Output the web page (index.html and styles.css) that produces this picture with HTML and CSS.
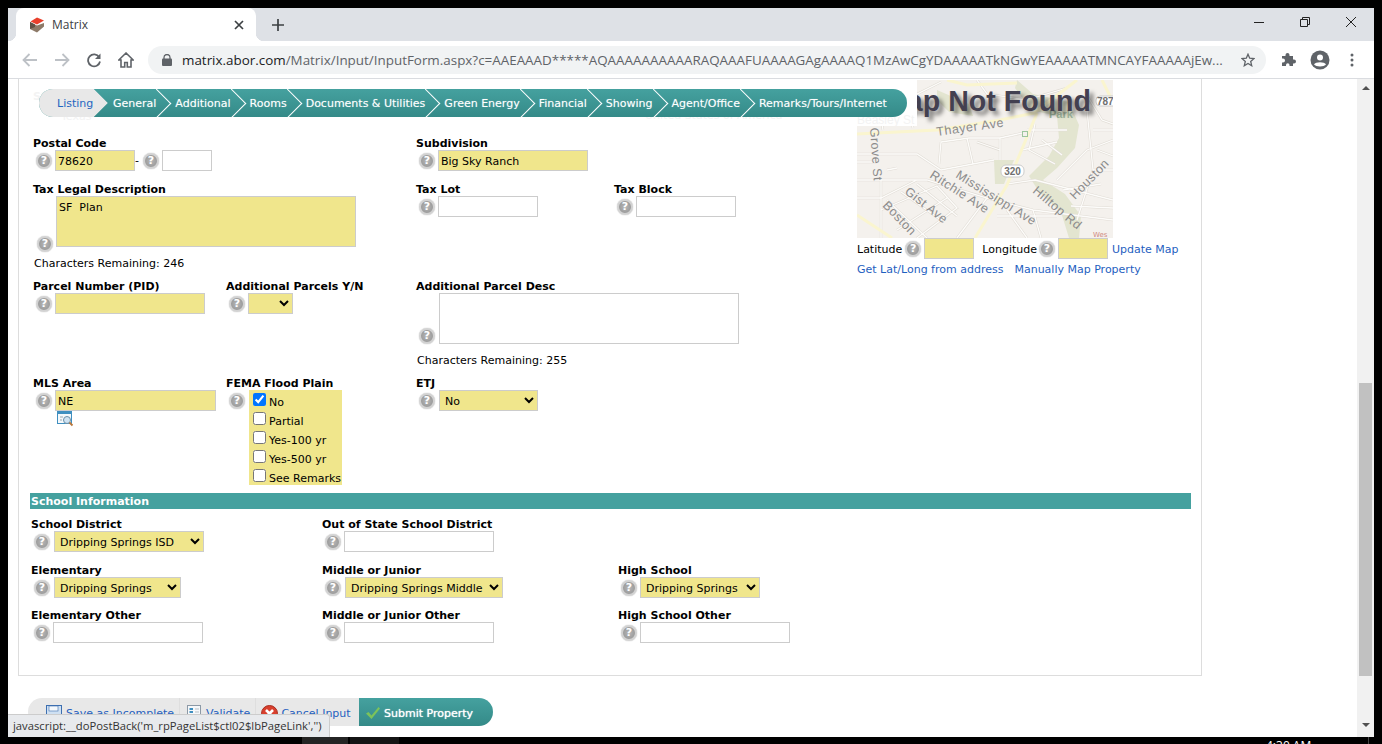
FILE: index.html
```html
<!DOCTYPE html>
<html lang="en">
<head>
    <meta charset="UTF-8">
    <title>Matrix</title>
    <link rel="stylesheet" href="styles.css">
</head>
<body>
<div class="window">
    <div class="tabstrip">
        <div class="tab">
            <svg class="favicon" width="16" height="16" viewBox="0 0 16 16"><path d="M8 .5 15 3.500 8 7.500 1.500 4.500Z" fill="#e8402c"/><path d="M1 5 8 8.500 15 6v3.500L8 15.500 1 12Z" fill="#8d7a68"/><path d="M1 5 6 7.500V10L1 12Z" fill="#5f5145"/></svg>
            <span class="tab-title">Matrix</span>
            <svg class="tab-close" width="10" height="10" viewBox="0 0 10 10"><path d="M1 1 9 9M9 1 1 9" stroke="#3c4043" stroke-width="1.700"/></svg>
        </div>
        <svg class="new-tab" width="12" height="12" viewBox="0 0 12 12"><path d="M6 0V12M0 6H12" stroke="#3c4043" stroke-width="1.700"/></svg>
        <div class="win-controls">
            <span class="win-btn"><svg width="10" height="10" viewBox="0 0 10 10"><path d="M0 5.500H10" stroke="#222" stroke-width="1"/></svg></span>
            <span class="win-btn"><svg width="10" height="10" viewBox="0 0 10 10"><path d="M.5 2.500H7.500V9.500H.5ZM2.500 2.500V.5H9.500V7.500H7.500" fill="none" stroke="#222"/></svg></span>
            <span class="win-btn"><svg width="10" height="10" viewBox="0 0 10 10"><path d="M0 0 10 10M10 0 0 10" stroke="#222" stroke-width="1"/></svg></span>
        </div>
    </div>

    <div class="toolbar">
        <span class="tool"><svg width="16" height="14" viewBox="0 0 16 14"><path d="M15 7H2M7.500 1 1.500 7l6 6" fill="none" stroke="#bdc1c6" stroke-width="1.800"/></svg></span>
        <span class="tool"><svg width="16" height="14" viewBox="0 0 16 14"><path d="M1 7H14M8.500 1l6 6-6 6" fill="none" stroke="#bdc1c6" stroke-width="1.800"/></svg></span>
        <span class="tool"><svg width="16" height="16" viewBox="0 0 16 16"><path d="M13.200 5.200A6 6 0 1 0 14 9.500" fill="none" stroke="#5f6368" stroke-width="1.800"/><path d="M14.500 1.500V7H9Z" fill="#5f6368"/></svg></span>
        <span class="tool"><svg width="16" height="16" viewBox="0 0 16 16"><path d="M8 1 .8 8H3v7h3.700v-4.500h2.600V15H13V8h2.200Z" fill="none" stroke="#5f6368" stroke-width="1.600"/></svg></span>
        <div class="omnibox">
            <svg class="lock" width="10" height="12" viewBox="0 0 10 12"><path d="M2 5V3.500a3 3 0 0 1 6 0V5" fill="none" stroke="#5f6368" stroke-width="1.300"/><rect y="4.500" width="10" height="7.500" rx="1" fill="#5f6368"/></svg>
            <span class="url"><b>matrix.abor.com</b>/Matrix/Input/InputForm.aspx?c=AAEAAAD*****AQAAAAAAAAAARAQAAAFUAAAAGAgAAAAQ1MzAwCgYDAAAAATkNGwYEAAAAATMNCAYFAAAAAjEw...</span>
            <svg class="star" width="14" height="14" viewBox="0 0 14 14"><path d="M7 1.200 8.700 5.200 13 5.600 9.700 8.400 10.700 12.700 7 10.400 3.300 12.700 4.300 8.400 1 5.600 5.300 5.200Z" fill="none" stroke="#5f6368" stroke-width="1.300"/></svg>
        </div>
        <span class="tool first-ext"><svg width="15" height="15" viewBox="0 0 15 15"><path d="M1 4H4.500V3A2 2 0 0 1 8.500 3V4H12V7.500H13a2 2 0 0 1 0 4H12V14H8.500V13A1.700 1.700 0 0 0 5 13V14H1V10.500H2a2 2 0 0 0 0-4H1Z" fill="#5f6368"/></svg></span>
        <span class="tool"><svg width="20" height="20" viewBox="0 0 20 20"><circle cx="10" cy="10" r="9.500" fill="#5f6368"/><circle cx="10" cy="7.500" r="3" fill="#fff"/><path d="M4 14.500C5.500 11.500 14.500 11.500 16 14.500 14 17 6 17 4 14.500Z" fill="#fff"/></svg></span>
        <span class="tool"><svg width="4" height="14" viewBox="0 0 4 14"><circle cx="2" cy="2" r="1.500" fill="#5f6368"/><circle cx="2" cy="7" r="1.500" fill="#5f6368"/><circle cx="2" cy="12" r="1.500" fill="#5f6368"/></svg></span>
    </div>

    <div class="viewport">
        <div class="content">
            <div class="panel">
                <div class="top">
                    <div class="top-left">
                        <div class="row row-postal">
                            <div class="field">
                                <label>Postal Code</label>
                                <div class="ctl"><span class="help">?</span><input class="req w80" value="78620"><span class="dash">-</span><span class="help">?</span><input class="w50"></div>
                            </div>
                            <div></div>
                            <div class="field">
                                <label>Subdivision</label>
                                <div class="ctl"><span class="help">?</span><input class="req w150" value="Big Sky Ranch"></div>
                            </div>
                        </div>
                        <div class="row row-tax">
                            <div class="field span2">
                                <label>Tax Legal Description</label>
                                <div class="ctl ctl-area"><span class="help help-area">?</span><textarea class="req">SF  Plan</textarea></div>
                                <div class="remaining">Characters Remaining: 246</div>
                            </div>
                            <div class="field">
                                <label>Tax Lot</label>
                                <div class="ctl"><span class="help">?</span><input class="w100"></div>
                            </div>
                            <div class="field">
                                <label>Tax Block</label>
                                <div class="ctl"><span class="help">?</span><input class="w100"></div>
                            </div>
                        </div>
                        <div class="row row-parcel">
                            <div class="field">
                                <label>Parcel Number (PID)</label>
                                <div class="ctl"><span class="help">?</span><input class="req w150"></div>
                            </div>
                            <div class="field">
                                <label>Additional Parcels Y/N</label>
                                <div class="ctl"><span class="help">?</span><select class="req sel-yn"><option></option></select></div>
                            </div>
                            <div class="field span2">
                                <label>Additional Parcel Desc</label>
                                <div class="ctl ctl-area"><span class="help">?</span><textarea class="plain"></textarea></div>
                                <div class="remaining">Characters Remaining: 255</div>
                            </div>
                        </div>
                        <div class="row row-area">
                            <div class="field">
                                <label>MLS Area</label>
                                <div class="ctl"><span class="help">?</span><input class="req w161" value="NE"></div>
                                <svg class="lookup" width="17" height="16" viewBox="0 0 17 16"><rect x=".5" y=".5" width="14" height="12" fill="#f4f8fb" stroke="#3f8fc0"/><rect x="1" y="1" width="13" height="2" fill="#3f8fc0"/><path d="M3 6H6M3 9H5" stroke="#9aa7b0"/><circle cx="10" cy="9" r="3.500" fill="#cfe3f2" stroke="#6c8fa8"/><path d="M12.500 11.500 15.500 14.500" stroke="#b9773a" stroke-width="1.800"/></svg>
                            </div>
                            <div class="field">
                                <label>FEMA Flood Plain</label>
                                <div class="ctl ctl-top">
                                    <span class="help">?</span>
                                    <div class="checks">
                                        <div class="check"><input type="checkbox" checked>No</div>
                                        <div class="check"><input type="checkbox">Partial</div>
                                        <div class="check"><input type="checkbox">Yes-100 yr</div>
                                        <div class="check"><input type="checkbox">Yes-500 yr</div>
                                        <div class="check"><input type="checkbox">See Remarks</div>
                                    </div>
                                </div>
                            </div>
                            <div class="field">
                                <label>ETJ</label>
                                <div class="ctl"><span class="help">?</span><select class="req sel sel-etj"><option>No</option></select></div>
                            </div>
                        </div>
                    </div>

                    <div class="map-col">
                        <div class="map">
                            <svg width="256" height="158" viewBox="0 0 256 158">
                                <rect width="256" height="158" fill="#f4f1ed"/>
                                <g fill="#e3e5d0">
                                    <path d="M160 0 176 14 212 22 222 45 218 68 200 88 186 100 208 114 224 136 222 158H212L204 132 182 112 172 96 192 76 202 58 200 36 174 30 158 8Z"/>
                                    <path d="M80 10 112 24 116 36 92 32 80 20Z"/>
                                    <path d="M137 80H157L147 104H138Z"/>
                                </g>
                                <g fill="none" stroke="#e0dcd5" stroke-width="2.400">
                                    <path id="streets" d="M0 74H60L84 90 137 80M0 100H70L130 118 176 130 256 140M84 62 112 58H143V80M84 62 82 84M110 58 116 84M24 100V158M0 118H24L60 100M24 130 80 106 100 128 60 158M40 150 90 118M150 104 178 100 256 120M170 50H210M165 70 200 62M178 44 172 70 198 84M230 30 236 90 220 140M200 100 230 70 256 60M236 50H256M236 90H256M130 118 100 158M0 82H18M30 90 40 88M143 58 170 52M120 62 143 70M185 60 205 75M176 18 210 8M228 12 245 40 256 44M30 120 70 158M44 112 84 140M60 104 100 136M150 130 170 158M176 130 184 158M140 136H200M206 110 244 104M214 126 256 128M240 70 256 76M120 0 130 14 170 20M0 20 60 14 84 2M20 14 26 50M50 16 56 48"/>
                                </g>
                                <use href="#streets" class="street-fill"/>
                                <g fill="none" stroke="#faf5cf" stroke-width="3">
                                    <path d="M0 54 80 50 143 40 177 33 220 0M90 0 110 5 160 3M118 158 150 105 180 33M0 135 35 158M245 0 256 22"/>
                                </g>
                                <rect x="165.500" y="51.500" width="5" height="5" fill="#f4f1ed" stroke="#9cc59c"/>
                                <g class="map-labels">
                                    <text transform="translate(80 56) rotate(-8)">Thayer Ave</text>
                                    <text transform="translate(13 48) rotate(86)">Grove St</text>
                                    <text transform="translate(98 97) rotate(32)">Mississippi Ave</text>
                                    <text transform="translate(72 97) rotate(33)">Ritchie Ave</text>
                                    <text transform="translate(47 113) rotate(38)">Gist Ave</text>
                                    <text transform="translate(25 126) rotate(46)">Boston</text>
                                    <text transform="translate(175 112) rotate(40)">Hilltop Rd</text>
                                    <text transform="translate(218 120) rotate(-46)">Houston</text>
                                </g>
                                <text class="map-park" x="192" y="38">Park</text>
                                <rect x="144" y="85" width="23" height="12" rx="5" fill="#fff" stroke="#ccc"/>
                                <text class="map-shield" x="155.500" y="95" text-anchor="middle">320</text>
                                <rect x="239" y="16" width="22" height="10" rx="4" fill="#fff" stroke="#ccc"/>
                                <text class="map-shield" x="240" y="25">787</text>
                                <text class="map-town" x="236" y="157">Wes</text>
                            </svg>
                            <div class="map-missing">Map Not Found</div>
                        </div>
                        <div class="latlong">
                            <span>Latitude</span><span class="help">?</span><input class="req w50 ll">
                            <span class="lon-label">Longitude</span><span class="help">?</span><input class="req w50 ll">
                            <a class="update-link">Update Map</a>
                        </div>
                        <div class="map-links"><a>Get Lat/Long from address</a><a>Manually Map Property</a></div>
                    </div>
                </div>

                <div class="section-bar">School Information</div>

                <div class="school-row first">
                    <div class="field">
                        <label>School District</label>
                        <div class="ctl"><span class="help">?</span><select class="req sel sel-district"><option>Dripping Springs ISD</option></select></div>
                    </div>
                    <div class="field">
                        <label>Out of State School District</label>
                        <div class="ctl"><span class="help">?</span><input class="w150"></div>
                    </div>
                </div>
                <div class="school-row">
                    <div class="field">
                        <label>Elementary</label>
                        <div class="ctl"><span class="help">?</span><select class="req sel sel-elem"><option>Dripping Springs</option></select></div>
                    </div>
                    <div class="field">
                        <label>Middle or Junior</label>
                        <div class="ctl"><span class="help">?</span><select class="req sel sel-middle"><option>Dripping Springs Middle</option></select></div>
                    </div>
                    <div class="field">
                        <label>High School</label>
                        <div class="ctl"><span class="help">?</span><select class="req sel sel-high"><option>Dripping Springs</option></select></div>
                    </div>
                </div>
                <div class="school-row other">
                    <div class="field">
                        <label>Elementary Other</label>
                        <div class="ctl"><span class="help">?</span><input class="w150"></div>
                    </div>
                    <div class="field">
                        <label>Middle or Junior Other</label>
                        <div class="ctl"><span class="help">?</span><input class="w150"></div>
                    </div>
                    <div class="field">
                        <label>High School Other</label>
                        <div class="ctl"><span class="help">?</span><input class="w150"></div>
                    </div>
                </div>
            </div>

            <div class="actions">
                <div class="actions-left">
                    <a class="action">
                        <svg width="16" height="16" viewBox="0 0 16 16"><rect x=".5" y=".5" width="15" height="15" fill="#cfe0f2" stroke="#3d6fb0"/><rect x="3" y="1" width="9" height="5" fill="#f4f8fc" stroke="#3d6fb0" stroke-width=".6"/><rect x="3" y="10" width="10" height="5" fill="#7fa5d2"/></svg>
                        Save as Incomplete</a>
                    <a class="action">
                        <svg width="16" height="16" viewBox="0 0 16 16"><rect x=".5" y=".5" width="13" height="14" fill="#f6f8fa" stroke="#8c99a6"/><path d="M2.500 4H6M2.500 7H6" stroke="#3f8fc0" stroke-width="2"/><path d="M8 4H12M8 7H12" stroke="#b5bec7"/><path d="M6 12H11V9.500L15.500 13 11 16V14H6Z" fill="#3fa34d"/></svg>
                        Validate</a>
                    <a class="action">
                        <svg width="17" height="17" viewBox="0 0 17 17"><circle cx="8.500" cy="8.500" r="8" fill="#d8402e" stroke="#a82c1e"/><path d="M5 5 12 12M12 5 5 12" stroke="#fff" stroke-width="2.600"/></svg>
                        Cancel Input</a>
                </div>
                <a class="submit">
                    <svg width="16" height="14" viewBox="0 0 16 14"><path d="M1 7.500 3.500 6 6.500 9.500 13.500 1 15 2.500 6.500 13Z" fill="#7cc35a"/></svg>
                    Submit Property</a>
            </div>

            <div class="nav-backdrop">
                <span class="ghost ghost-state">State</span>
                <span class="ghost ghost-texas">Texas</span>
                <span class="ghost ghost-country">United States of America</span>
                <span class="ghost ghost-street">Beasley St</span>
                <div class="wizard">
                    <a class="step current">Listing</a>
                    <a class="step">General</a>
                    <a class="step">Additional</a>
                    <a class="step">Rooms</a>
                    <a class="step">Documents &amp; Utilities</a>
                    <a class="step">Green Energy</a>
                    <a class="step">Financial</a>
                    <a class="step">Showing</a>
                    <a class="step">Agent/Office</a>
                    <a class="step last">Remarks/Tours/Internet</a>
                </div>
            </div>

            <div class="status-bubble">javascript:__doPostBack('m_rpPageList$ctl02$lbPageLink','')</div>
        </div>

        <div class="scrollbar">
            <span class="arrow arrow-up"></span>
            <span class="thumb"></span>
            <span class="arrow arrow-down"></span>
        </div>
    </div>
</div>
<div class="taskbar">
    <span class="task task-a"></span>
    <span class="task task-b"></span>
    <span class="clock">4:30 AM</span>
    <span class="task-line"></span>
</div>
</body>
</html>
```

FILE: styles.css
```css
* {
    box-sizing: border-box;
}
html, body {
    height: 100%;
}
body {
    margin: 0;
    background: #000;
    overflow: hidden;
    font-family: "DejaVu Sans", Verdana, sans-serif;
    font-size: 11px;
    color: #000;
}
.window {
    margin: 8px 8px 0 8px;
    width: 1366px;
    height: 729px;
    background: #fff;
    display: flex;
    flex-direction: column;
}

/* browser chrome */
.tabstrip {
    height: 33px;
    background: #dee1e6;
    display: flex;
    align-items: center;
    flex: none;
}
.tab {
    position: relative;
    width: 240px;
    height: 33px;
    margin-left: 8px;
    background: #fff;
    border-radius: 8px 8px 0 0;
    display: flex;
    align-items: center;
    padding-left: 13px;
}
.tab::before, .tab::after {
    content: "";
    position: absolute;
    bottom: 0;
    width: 8px;
    height: 8px;
}
.tab::before {
    left: -8px;
    background: radial-gradient(circle at 0 0, #dee1e6 8px, #fff 8.5px);
}
.tab::after {
    right: -8px;
    background: radial-gradient(circle at 100% 0, #dee1e6 8px, #fff 8.5px);
}
.favicon {
    flex: none;
}
.tab-title {
    margin-left: 7px;
    font-family: "Open Sans", sans-serif;
    font-size: 12px;
    color: #3c4043;
}
.tab-close {
    margin-left: auto;
    margin-right: 12px;
}
.new-tab {
    margin-left: 16px;
}
.win-controls {
    margin-left: auto;
    display: flex;
    height: 100%;
}
.win-btn {
    width: 46px;
    height: 28px;
    display: flex;
    align-items: center;
    justify-content: center;
}
.toolbar {
    height: 38px;
    flex: none;
    display: flex;
    align-items: center;
    padding: 0 6px;
    border-bottom: 1px solid #dadce0;
}
.tool {
    width: 32px;
    height: 28px;
    display: flex;
    align-items: center;
    justify-content: center;
    flex: none;
}
.omnibox {
    flex: 1;
    height: 28px;
    margin-left: 6px;
    background: #f1f3f4;
    border-radius: 14px;
    display: flex;
    align-items: center;
    padding-left: 14px;
    min-width: 0;
}
.lock {
    flex: none;
}
.url {
    margin-left: 10px;
    font-family: "Open Sans", sans-serif;
    font-size: 13.420px;
    color: #5f6368;
    white-space: nowrap;
    width: 1042px;
}
.url b {
    font-weight: normal;
    color: #202124;
}
.star {
    margin-left: 17px;
    flex: none;
}
.first-ext {
    margin-left: 6px;
}

/* page area */
.viewport {
    flex: 1;
    display: flex;
    min-height: 0;
}
.content {
    position: relative;
    width: 1349px;
    overflow: hidden;
}
.panel {
    margin-left: 10px;
    width: 1184px;
    height: 597px;
    border: 1px solid #ddd;
    border-top: 0;
}
.top {
    display: flex;
    height: 414px;
}
.top-left {
    width: 838px;
    padding-top: 57px;
}
.row {
    display: grid;
    grid-template-columns: 193px 190px 198px 198px;
    padding-left: 14px;
}
.row-tax {
    margin-top: 11px;
}
.row-parcel {
    margin-top: 9px;
}
.row-area {
    margin-top: 9px;
}
.span2 {
    grid-column: span 2;
}
.field label {
    display: block;
    font-weight: bold;
    height: 14px;
    line-height: 16px;
    white-space: nowrap;
}
.ctl {
    display: flex;
    align-items: center;
    gap: 3px;
    margin-left: 3px;
    height: 21px;
}
.ctl-top {
    align-items: flex-start;
    height: auto;
}
.ctl-area {
    height: 51px;
    align-items: flex-end;
}
.help {
    width: 16px;
    height: 16px;
    flex: none;
    border-radius: 50%;
    background: radial-gradient(#b8b8b8, #8f8f8f);
    border: 2px solid #d2d2d2;
    box-shadow: 0 0 1px #999;
    color: #fff;
    font-weight: bold;
    font-size: 11px;
    line-height: 12px;
    text-align: center;
}
.ctl-top .help {
    margin-top: 3px;
}
.help-area {
    margin: 0 0 -5px 1px;
}
input:not([type=checkbox]), textarea, select {
    font-family: "DejaVu Sans", Verdana, sans-serif;
    font-size: 11px;
    color: #000;
    background: #fff;
    border: 1px solid #ccc;
    border-radius: 0;
    outline: none;
    margin: 0;
    height: 21px;
    padding: 2px 2px 0;
    flex: none;
}
input.req, textarea.req, select.req {
    background: #f0e68c;
}
select.req {
    padding-left: 1px;
}
textarea {
    width: 300px;
    height: 51px !important;
    resize: none;
    overflow: hidden;
    padding-top: 4px !important;
}
.w50 { width: 50px; }
.w80 { width: 80px; }
.w100 { width: 100px; }
.w150 { width: 150px; }
.w161 { width: 161px; }
.dash {
    margin: 0 -1px 0 -3px;
    width: 6px;
}
.plain {
    margin-left: 1px;
}
.remaining {
    margin: 9px 0 0 1px;
    height: 14px;
    line-height: 16px;
    white-space: nowrap;
}
.lookup {
    display: block;
    margin: 0 0 0 24px;
}
.sel {
    margin-left: 1px;
}
.sel-yn { width: 45px; }
.sel-etj { width: 99px; }
.sel-district { width: 150px; }
.sel-elem { width: 127px; }
.sel-middle { width: 158px; }
.sel-high {
    width: 120px;
    margin-left: 0;
}
.checks {
    width: 93px;
    height: 95px;
    margin-left: 1px;
    background: #f0e68c;
}
.check {
    height: 19px;
    display: flex;
    align-items: flex-start;
    line-height: 26px;
    white-space: nowrap;
}
.check input {
    margin: 3px 3px 0 4px;
}

/* map */
.map-col {
    padding-top: 1px;
}
.map {
    position: relative;
    width: 256px;
    height: 158px;
    overflow: hidden;
}
.map svg {
    display: block;
}
.street-fill {
    fill: none;
    stroke: #fdfcfa;
    stroke-width: 1.300;
}
.map-labels text {
    font-family: "Liberation Sans", sans-serif;
    font-size: 12.500px;
    fill: #8b8b8b;
    letter-spacing: .5px;
}
.map-park {
    font-family: "Liberation Sans", sans-serif;
    font-size: 11px;
    font-weight: bold;
    fill: #9fb59e;
}
.map-shield {
    font-family: "Liberation Sans", sans-serif;
    font-size: 10px;
    font-weight: bold;
    fill: #6f6f6f;
}
.map-town {
    font-size: 7px;
    fill: #d08a80;
}
.map-missing {
    position: absolute;
    left: 26px;
    top: 5px;
    font-family: "Liberation Sans", sans-serif;
    font-size: 28.600px;
    font-weight: bold;
    line-height: 33px;
    color: #434050;
    white-space: nowrap;
    text-shadow: 4px 4px 4px rgba(0,0,0,.5);
}
.latlong {
    display: flex;
    align-items: center;
    gap: 3px;
    height: 21px;
    line-height: 14px;
}
.latlong > span:not(.help), .latlong a {
    padding-top: 2px;
}
.lon-label {
    margin: 0 -1px 0 5px;
}
.update-link {
    margin-left: 1px;
}
a {
    color: #1f5fbf;
    white-space: nowrap;
}
.map-links {
    display: flex;
    gap: 11px;
    margin-top: 4px;
    line-height: 14px;
}

/* school section */
.section-bar {
    margin: 0 10px 0 11px;
    height: 16px;
    background: #45a19f;
    color: #fff;
    font-weight: bold;
    line-height: 18px;
    padding-left: 1px;
}
.school-row {
    display: grid;
    grid-template-columns: 291px 296px 1fr;
    padding-left: 12px;
    margin-top: 11px;
}
.school-row.first {
    margin-top: 8px;
}
.school-row.other {
    margin-top: 10px;
}

/* bottom actions */
.actions {
    display: flex;
    margin: 22px 0 0 20px;
    width: 465px;
    height: 28px;
}
.actions-left {
    flex: none;
    width: 331px;
    background: #e8e8e8;
    border-radius: 14px 0 0 14px;
    display: flex;
    padding-left: 13px;
}
.action {
    display: flex;
    align-items: center;
    gap: 3px;
    padding: 2px 5px 0;
    border-right: 1px solid #dedede;
}
.action:first-child {
    margin-right: 2px;
}
.action:first-child svg {
    margin-right: 1px;
}
.action:last-child {
    border-right: 0;
}
.submit {
    flex: 1;
    background: linear-gradient(#45a19f, #348a88);
    border-radius: 0 14px 14px 0;
    display: flex;
    align-items: center;
    gap: 3px;
    padding: 2px 0 0 6px;
    color: #fff;
    text-shadow: 0 0 1px #fff;
}

/* wizard strip, stays over the scrolled form */
.nav-backdrop {
    position: absolute;
    left: 11px;
    top: 0;
    width: 898px;
    height: 47px;
    background: #fff;
    overflow: hidden;
}
.ghost {
    position: absolute;
    color: #f3f3f3;
    white-space: nowrap;
}
.ghost-state { left: 14px; top: 11px; font-weight: bold; }
.ghost-texas { left: 42px; top: 31px; }
.ghost-country { left: 626px; top: 30px; }
.ghost-street { left: 838px; top: 34px; font-family: "Liberation Sans", sans-serif; font-size: 12px; }
.wizard {
    position: absolute;
    left: 20px;
    top: 10px;
    width: 868px;
    height: 28px;
    display: flex;
    align-items: center;
    overflow: hidden;
    border-radius: 14px;
    background: linear-gradient(#45a19f, #348a88);
}
.step {
    position: relative;
    height: 28px;
    line-height: 30px;
    padding-left: 19px;
    color: #fff;
    text-shadow: 0 0 1px rgba(255,255,255,.4);
}
.step::after {
    content: "";
    position: absolute;
    left: calc(100% - 10px);
    top: 4px;
    width: 20px;
    height: 20px;
    transform: rotate(45deg);
    border-top: 1px solid #fff;
    border-right: 1px solid #fff;
}
.step.last::after {
    display: none;
}
.step.current {
    width: 55px;
    padding-left: 18px;
    color: #1f66c1;
    background: #e8e8e8;
    text-shadow: none;
    white-space: nowrap;
}
.step.current::after {
    background: #e8e8e8;
    border: 0;
    clip-path: polygon(0 0, 100% 0, 100% 100%);
}
.status-bubble {
    position: absolute;
    left: 0;
    bottom: 0;
    width: 322px;
    height: 23px;
    padding-left: 5px;
    background: #e8eaed;
    border-top: 1px solid #ccc;
    border-right: 1px solid #ccc;
    border-radius: 0 3px 0 0;
    font-family: "Open Sans", sans-serif;
    font-size: 11.250px;
    line-height: 22px;
    color: #333;
    white-space: nowrap;
}

/* scrollbar */
.scrollbar {
    width: 17px;
    background: #f1f1f1;
    display: flex;
    flex-direction: column;
    align-items: center;
    padding-bottom: 7px;
}
.arrow {
    width: 0;
    height: 0;
    border-left: 4px solid transparent;
    border-right: 4px solid transparent;
}
.arrow-up {
    margin-top: 7px;
    border-bottom: 4px solid #505050;
}
.arrow-down {
    margin-top: 47px;
    border-top: 4px solid #505050;
}
.thumb {
    width: 13px;
    height: 293px;
    margin-top: 293px;
    background: #c1c1c1;
}

/* what shows of the desktop below the window */
.taskbar {
    height: 7px;
    display: flex;
    overflow: hidden;
}
.task-a {
    margin-left: 302px;
    width: 46px;
    background: #242424;
}
.task-b {
    margin-left: 2px;
    width: 49px;
    background: #141414;
}
.clock {
    margin-left: 867px;
    width: 102px;
    font-family: "Open Sans", sans-serif;
    font-size: 12px;
    line-height: 16px;
    padding-top: 1px;
    color: #fff;
}
.task-line {
    width: 1px;
    background: #444;
}
```
